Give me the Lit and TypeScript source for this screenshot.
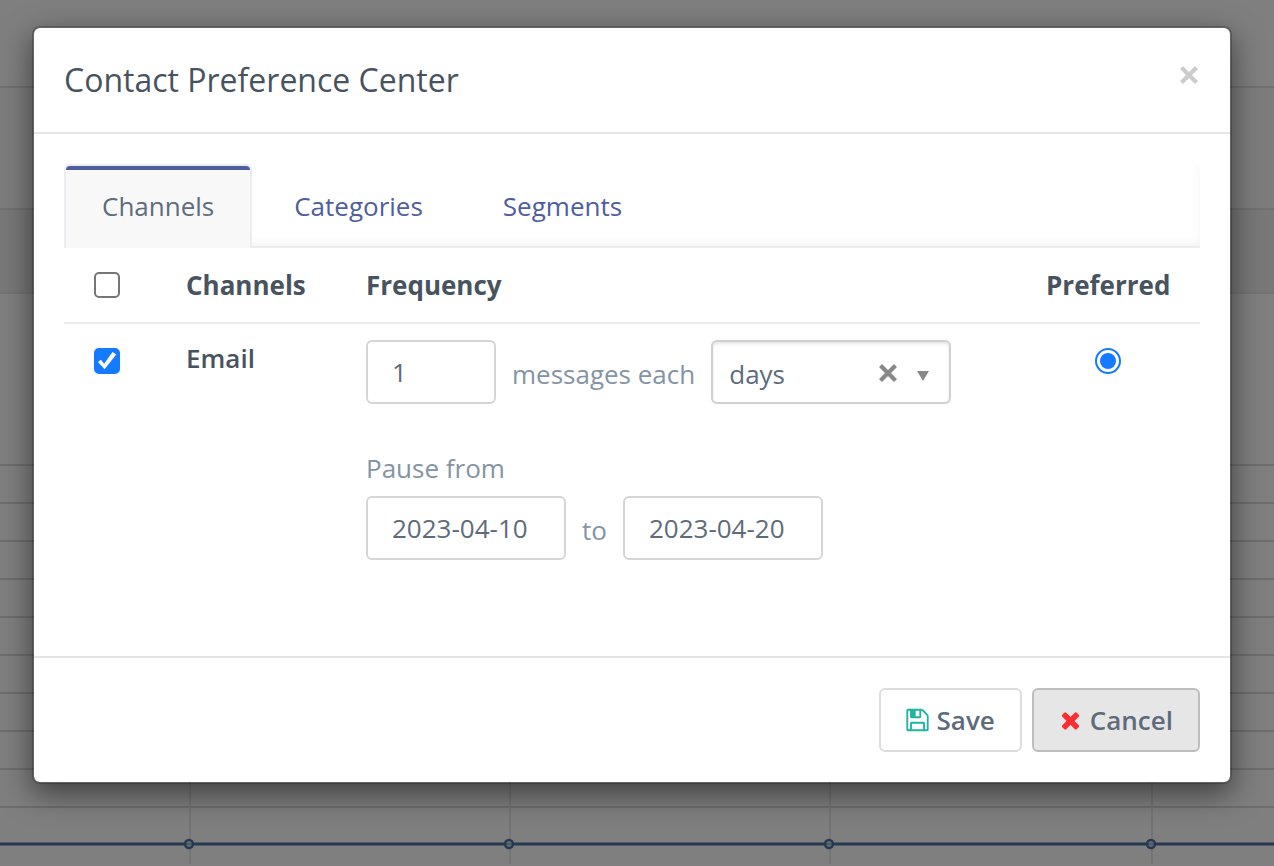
import { LitElement, html, css, svg } from "lit";
import { customElement, state } from "lit/decorators.js";

const GRID_LINES = Array.from({ length: 10 }, (_, i) => 1 + i * 38);
const MARKERS = [190, 510, 830, 1152];

const crossIcon = html`<svg class="cross" viewBox="0 0 18 18" aria-hidden="true">
  <path d="M3 0 9 6 15 0 18 3 12 9 18 15 15 18 9 12 3 18 0 15 6 9 0 3z" />
</svg>`;

@customElement("page-backdrop")
export class PageBackdrop extends LitElement {
  static styles = css`
    :host {
      display: block;
      position: absolute;
      inset: 0;
      overflow: hidden;
      background: #fff;
    }
    .bar {
      height: 86px;
      border-bottom: 2px solid #e2e2e2;
    }
    .strip {
      height: 120px;
      background: #fafafa;
      border-bottom: 2px solid #e3e3e5;
    }
    .panel {
      height: 84px;
      box-sizing: border-box;
      background: #f1f1f1;
      border-top: 2px solid #eff2f8;
      border-bottom: 2px solid #e9e9e9;
    }
    .chart {
      display: block;
      width: 100%;
      height: 402px;
      margin-top: 170px;
    }
    .line {
      stroke: #dcdcdc;
      stroke-width: 2;
    }
    .tick {
      stroke: #e8e8e8;
      stroke-width: 2;
    }
    .series {
      stroke: #4e70a4;
      stroke-width: 3;
    }
    .dot {
      fill: #f0f4f8;
      fill-opacity: 0.5;
      stroke: #4e70a4;
      stroke-width: 2.5;
    }
    .shade {
      position: absolute;
      inset: 0;
      background: rgba(0, 0, 0, 0.5);
    }
  `;

  render() {
    return html`
      <div class="bar"></div>
      <div class="strip"></div>
      <div class="panel"></div>
      <svg class="chart" aria-hidden="true">
        ${MARKERS.map((x) => svg`<line class="tick" x1=${x} x2=${x} y1="0" y2="400" />`)}
        ${GRID_LINES.map((y) => svg`<line class="line" x1="0" x2="100%" y1=${y} y2=${y} />`)}
        <line class="series" x1="0" x2="100%" y1="380" y2="380" />
        ${MARKERS.map((x) => svg`<circle class="dot" cx=${x - 1} cy="380" r="4" />`)}
      </svg>
      <div class="shade"></div>
    `;
  }
}

@customElement("app-root")
export class AppRoot extends LitElement {
  @state() private tab = "Channels";

  static styles = css`
    :host {
      display: block;
      position: relative;
      min-height: 100vh;
      overflow: hidden;
      box-sizing: border-box;
      padding: 26px 42px 26px 32px;
      font: 26px/36px "Open Sans", sans-serif;
      color: #47535f;
    }
    * {
      box-sizing: border-box;
    }
    input,
    select,
    button {
      margin: 0;
      font: inherit;
      color: inherit;
    }
    .modal {
      position: relative;
      background: #fff;
      background-clip: padding-box;
      border: 2px solid rgba(0, 0, 0, 0.2);
      border-radius: 8px;
      box-shadow: 0 10px 30px rgba(0, 0, 0, 0.5);
    }
    .header {
      display: flex;
      justify-content: space-between;
      align-items: flex-start;
      padding: 30px;
      border-bottom: 2px solid #e5e5e5;
    }
    .title {
      margin: 0;
      font-size: 32px;
      line-height: 44px;
      font-weight: 400;
    }
    .icon-button {
      display: flex;
      padding: 0;
      border: 0;
      background: none;
      cursor: pointer;
    }
    .cross {
      width: 18px;
      height: 18px;
      fill: currentColor;
    }
    .close {
      padding: 8px 2px;
      color: #ccc;
    }
    .body {
      padding: 30px 30px 80px;
    }
    .tabs {
      display: flex;
      margin: 0;
      padding: 0;
      height: 84px;
      list-style: none;
      border-bottom: 2px solid #ebebf0;
      border-radius: 6px 6px 0 0;
      box-shadow: inset -10px -12px 12px -12px rgba(0, 0, 0, 0.07);
    }
    .tab {
      display: block;
      height: 82px;
      margin: 0 2px;
      padding: 24px 38px;
      color: #4e5e9e;
      text-decoration: none;
    }
    .tab.active {
      height: 84px;
      margin: 0 2px 0 0;
      padding: 0 36px;
      color: #5d6c7c;
      background: #f8f8f8;
      border: solid #ebebf0;
      border-width: 2px 2px 0;
      border-radius: 6px 6px 0 0;
      position: relative;
    }
    .tab.active::before {
      content: "";
      display: block;
      height: 4px;
      margin: 0 -36px 18px;
      background: #4e5e9e;
      border-radius: 4px 4px 0 0;
    }
    .grid {
      width: 100%;
      table-layout: fixed;
      border-collapse: separate;
      border-spacing: 0;
    }
    .grid th,
    .grid td {
      padding: 16px;
      text-align: left;
      vertical-align: top;
    }
    .grid thead th {
      height: 76px;
      padding: 19px 16px;
      border-bottom: 2px solid #ebebf0;
      font-weight: 700;
    }
    .grid .pick {
      width: 106px;
      padding-left: 30px;
    }
    .name {
      width: 180px;
    }
    .grid tbody .name {
      font-weight: 600;
    }
    .grid .pref {
      width: 170px;
      padding-right: 30px;
      text-align: center;
    }
    .check,
    .radio {
      appearance: none;
      display: block;
      width: 26px;
      height: 26px;
      border: 2px solid #767676;
      border-radius: 5px;
      background: #fff;
    }
    tbody .check,
    tbody .radio {
      margin: 8px 0;
    }
    thead .check {
      margin: 5px 0;
    }
    .check:checked {
      border-color: #147aff;
      background: #147aff;
    }
    .check:checked::before {
      content: "";
      display: block;
      width: 22px;
      height: 22px;
      background: #fff;
      clip-path: polygon(9% 55%, 22% 44%, 37% 63%, 75% 9%, 92% 20%, 39% 88%);
    }
    tbody .radio {
      margin: 8px auto;
      padding: 3px;
      border-color: #147aff;
      border-radius: 50%;
    }
    .radio:checked::before {
      content: "";
      display: block;
      width: 16px;
      height: 16px;
      border-radius: 50%;
      background: #147aff;
    }
    .fields {
      display: flex;
      align-items: center;
      gap: 16px;
    }
    .hint {
      color: #8494a5;
    }
    .fields .hint {
      padding-top: 4px;
    }
    .pause {
      display: block;
      margin: 46px 0 10px;
    }
    .input {
      width: 200px;
      height: 64px;
      padding: 0 24px;
      border: 2px solid #d5d5d5;
      border-radius: 6px;
      background: #fff;
      color: #5d6c7c;
    }
    .input.short {
      width: 130px;
    }
    .combo {
      position: relative;
      width: 240px;
      height: 64px;
      color: #5d6c7c;
    }
    .select {
      appearance: none;
      width: 100%;
      height: 100%;
      padding: 4px 80px 0 16px;
      border: 2px solid #d0d0d0;
      border-radius: 6px;
      background: #fff;
      box-shadow: inset 0 2px 3px rgba(0, 0, 0, 0.1);
    }
    .clear {
      position: absolute;
      top: 24px;
      right: 54px;
      color: #888;
    }
    .arrow {
      position: absolute;
      top: 31px;
      right: 22px;
      width: 12px;
      height: 10px;
      fill: #888;
      pointer-events: none;
    }
    .footer {
      display: flex;
      justify-content: flex-end;
      gap: 10px;
      padding: 30px;
      border-top: 2px solid #e5e5e5;
    }
    .button {
      display: flex;
      align-items: center;
      height: 64px;
      gap: 8px;
      padding: 0 25px;
      border: 2px solid #ddd;
      border-radius: 6px;
      background: #fff;
      color: #5d6c7c;
      font-weight: 600;
      cursor: pointer;
    }
    .button.pressed {
      border-color: #bebebe;
      background: #e6e6e6;
    }
    .icon {
      width: 23px;
      height: 26px;
    }
    .save {
      fill: #1fb5a0;
    }
    .cancel {
      fill: #fd2d33;
    }
  `;

  render() {
    return html`
      <page-backdrop></page-backdrop>
      <section class="modal" role="dialog" aria-labelledby="title">
        <header class="header">
          <h1 class="title" id="title">Contact Preference Center</h1>
          <button class="icon-button close" aria-label="Close">${crossIcon}</button>
        </header>
        <div class="body">
          <ul class="tabs">
            ${["Channels", "Categories", "Segments"].map(
              (name) => html`<li>
                <a
                  class="tab ${name === this.tab ? "active" : ""}"
                  href="#${name.toLowerCase()}"
                  @click=${() => (this.tab = name)}
                  >${name}</a
                >
              </li>`
            )}
          </ul>
          <table class="grid">
            <thead>
              <tr>
                <th class="pick"><input class="check" type="checkbox" aria-label="All channels" /></th>
                <th class="name">Channels</th>
                <th>Frequency</th>
                <th class="pref">Preferred</th>
              </tr>
            </thead>
            <tbody>
              <tr>
                <td class="pick"><input class="check" id="email" type="checkbox" checked /></td>
                <th class="name"><label for="email">Email</label></th>
                <td>
                  <div class="fields">
                    <input class="input short" id="count" type="text" inputmode="numeric" value="1" />
                    <label class="hint" for="count">messages each</label>
                    <div class="combo">
                      <select class="select" aria-label="Period">
                        <option>days</option>
                        <option>weeks</option>
                        <option>months</option>
                      </select>
                      <button class="icon-button clear" aria-label="Clear period">${crossIcon}</button>
                      <svg class="arrow" viewBox="0 0 12 10" aria-hidden="true"><path d="M0 0h12L6 10z" /></svg>
                    </div>
                  </div>
                  <label class="hint pause" for="from">Pause from</label>
                  <div class="fields">
                    <input class="input" id="from" type="text" value="2023-04-10" />
                    <label class="hint" for="to">to</label>
                    <input class="input" id="to" type="text" value="2023-04-20" />
                  </div>
                </td>
                <td class="pref"><input class="radio" type="radio" name="preferred" aria-label="Prefer email" checked /></td>
              </tr>
            </tbody>
          </table>
        </div>
        <footer class="footer">
          <button class="button">
            <svg class="icon save" viewBox="0 0 1536 1792" aria-hidden="true">
              <path
                d="M384 1536h768v-384h-768v384zm896 0h128v-896q0-14-10-38.500t-20-34.500l-281-281q-10-10-34-20t-39-10v416q0 40-28 68t-68 28h-576q-40 0-68-28t-28-68v-416h-128v1280h128v-416q0-40 28-68t68-28h832q40 0 68 28t28 68v416zm-384-928v-320q0-13-9.500-22.500t-22.500-9.500h-192q-13 0-22.500 9.500t-9.500 22.500v320q0 13 9.500 22.500t22.500 9.500h192q13 0 22.500-9.500t9.500-22.500zm640 32v928q0 40-28 68t-68 28h-1344q-40 0-68-28t-28-68v-1344q0-40 28-68t68-28h928q40 0 88 20t76 48l280 280q28 28 48 76t20 88z"
              />
            </svg>
            Save
          </button>
          <button class="button pressed">
            <svg class="icon cancel" viewBox="103 0 1586 1792" aria-hidden="true">
              <path
                d="M1490 1322q0 40-28 68l-136 136q-28 28-68 28t-68-28l-294-294-294 294q-28 28-68 28t-68-28l-136-136q-28-28-28-68t28-68l294-294-294-294q-28-28-28-68t28-68l136-136q28-28 68-28t68 28l294 294 294-294q28-28 68-28t68 28l136 136q28 28 28 68t-28 68l-294 294 294 294q28 28 28 68z"
              />
            </svg>
            Cancel
          </button>
        </footer>
      </section>
    `;
  }
}
